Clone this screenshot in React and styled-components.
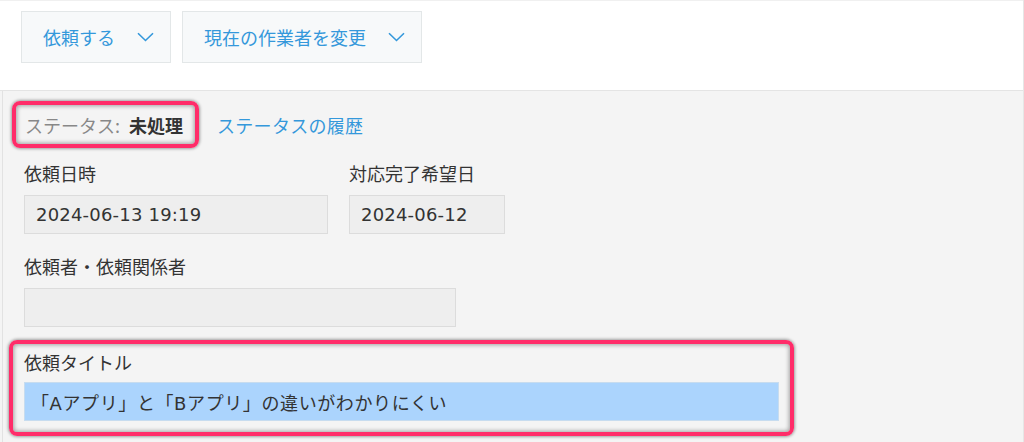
import React from "react";
import styled, { createGlobalStyle } from "styled-components";

const Global = createGlobalStyle`
  html, body { margin: 0; padding: 0; background: #f4f4f4; }
  body {
    font-family: "DejaVu Sans", "Noto Sans CJK JP", sans-serif;
    font-size: 18px;
    color: #333;
  }
`;

const Page = styled.div`
  width: 1024px;
  height: 442px;
  overflow: hidden;
  box-sizing: border-box;
  background: #f4f4f4;
  border-right: 1px solid #e6e6e6;
`;

const Toolbar = styled.div`
  height: 91px;
  box-sizing: border-box;
  background: #fff;
  border-top: 1px solid #f0f0f0;
  border-bottom: 1px solid #e4e4e4;
  padding: 10px 0 0 21px;
  display: flex;
  align-items: flex-start;
  gap: 11px;
`;

const MenuButton = styled.button`
  height: 52px;
  box-sizing: border-box;
  display: flex;
  align-items: center;
  gap: 22px;
  padding: 0 16px 0 21px;
  background: #f7f9fa;
  border: 1px solid #e3e7e8;
  color: #3498db;
  font-family: "Noto Sans CJK JP", sans-serif;
  font-size: 18px;
  line-height: 24px;
  cursor: pointer;
`;

const Chevron = () => (
  <svg width="17" height="10" viewBox="0 0 17 10" fill="none">
    <path d="M1 1.2 L8.5 8.5 L16 1.2" stroke="#3498db" strokeWidth="1.6" />
  </svg>
);

const Body = styled.div`
  margin-left: 2px;
  border-left: 1px solid #e2e2e2;
  padding: 10px 0 0 21px;
  height: 360px;
  box-sizing: border-box;
`;

const StatusRow = styled.div`
  display: flex;
  align-items: center;
  gap: 18px;
  margin-left: -12px;
`;

const Highlight = styled.div`
  border: 4px solid #ff2c69;
  border-radius: 8px;
  box-shadow: 0 0 3px 1px rgba(0, 0, 0, 0.35), inset 0 0 4px 1px rgba(0, 0, 0, 0.35);
`;

const StatusBox = styled(Highlight)`
  height: 47px;
  box-sizing: border-box;
  display: flex;
  align-items: center;
  padding: 0 12px 0 9px;
  font-family: "Noto Sans CJK JP", sans-serif;
  line-height: 24px;
`;

const StatusLabel = styled.span`
  color: #888;
`;

const StatusValue = styled.span`
  color: #333;
  font-weight: 700;
  margin-left: 9px;
`;

const Link = styled.a`
  color: #3498db;
  font-family: "Noto Sans CJK JP", sans-serif;
  line-height: 24px;
  letter-spacing: 0.3px;
  text-decoration: none;
`;

const FieldRow = styled.div`
  display: flex;
  gap: 21px;
  margin-top: ${(p) => p.$top}px;
`;

const Field = styled.div`
  display: flex;
  flex-direction: column;
  gap: 10px;
`;

const TitleField = styled(Highlight)`
  display: flex;
  flex-direction: column;
  gap: 8px;
  width: max-content;
  margin: 13px 0 0 -15px;
  padding: 6px 11px 11px 11px;
`;

const Label = styled.div`
  font-family: "Noto Sans CJK JP", sans-serif;
  line-height: 24px;
  color: #333;
`;

const Input = styled.div`
  width: ${(p) => p.$w}px;
  height: 39px;
  box-sizing: border-box;
  display: flex;
  align-items: center;
  padding-left: ${(p) => (p.$pad != null ? p.$pad : 11)}px;
  background: ${(p) => (p.$selected ? "#abd4fd" : "#eeeeee")};
  border: 1px solid ${(p) => (p.$selected ? "#c7dcef" : "#dcdcdc")};
  font-family: "DejaVu Sans", "Noto Sans CJK JP", sans-serif;
  font-size: 18px;
  letter-spacing: ${(p) => (p.$selected ? "0.6px" : "0.2px")};
  color: #333;
  white-space: nowrap;
`;

export default function App() {
  return (
    <>
      <Global />
      <Page>
        <Toolbar>
          <MenuButton>
            依頼する
            <Chevron />
          </MenuButton>
          <MenuButton>
            現在の作業者を変更
            <Chevron />
          </MenuButton>
        </Toolbar>
        <Body>
          <StatusRow>
            <StatusBox>
              <StatusLabel>ステータス:</StatusLabel>
              <StatusValue>未処理</StatusValue>
            </StatusBox>
            <Link href="#">ステータスの履歴</Link>
          </StatusRow>
          <FieldRow $top={13}>
            <Field>
              <Label>依頼日時</Label>
              <Input $w={304}>2024-06-13 19:19</Input>
            </Field>
            <Field>
              <Label>対応完了希望日</Label>
              <Input $w={156}>2024-06-12</Input>
            </Field>
          </FieldRow>
          <FieldRow $top={20}>
            <Field>
              <Label>依頼者・依頼関係者</Label>
              <Input $w={432} />
            </Field>
          </FieldRow>
          <TitleField>
            <Label>依頼タイトル</Label>
            <Input $w={755} $selected $pad={6}>
              「Aアプリ」と「Bアプリ」の違いがわかりにくい
            </Input>
          </TitleField>
        </Body>
      </Page>
    </>
  );
}
